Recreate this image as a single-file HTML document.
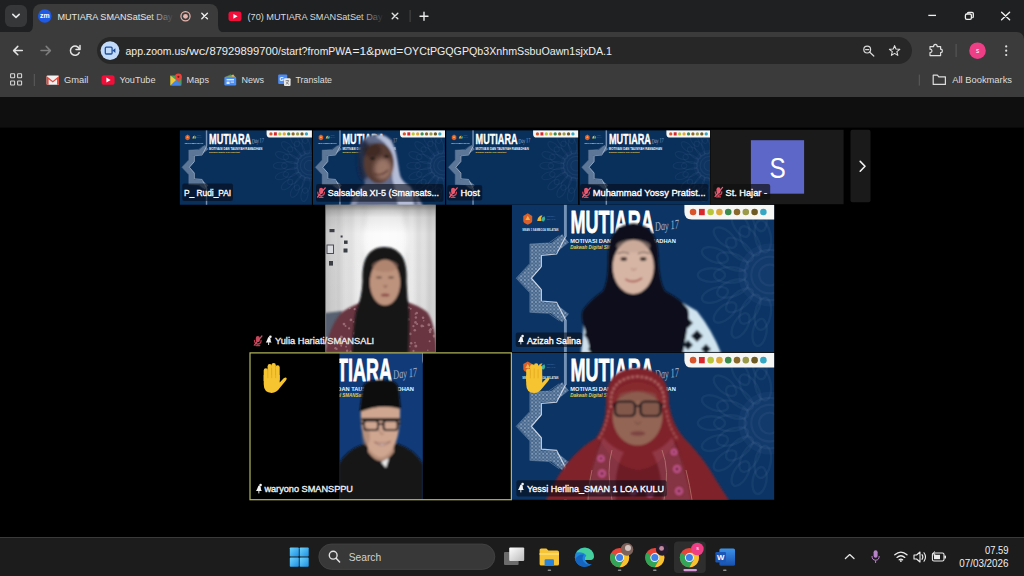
<!DOCTYPE html>
<html lang="id">
<head>
<meta charset="utf-8">
<title>MUTIARA SMANSatSet Day</title>
<style>
*{box-sizing:border-box;margin:0;padding:0}
html,body{width:1024px;height:576px;overflow:hidden;background:#000}
body{font-family:"Liberation Sans",sans-serif;color:#e3e3e3;position:relative}
.abs{position:absolute}
#tabstrip{left:0;top:0;width:1024px;height:44px;background:#1f2021}
#toolbar{left:0;top:32px;width:1024px;height:65px;background:#3b3b3b;border-top-right-radius:7px}
#tabsearch{left:5px;top:5px;width:22px;height:22px;border-radius:6px;background:#363738}
#tab1{left:33px;top:4px;width:185px;height:29px;background:#3b3b3b;border-radius:8px 8px 0 0}
#omni{left:97px;top:37px;width:815px;height:27px;border-radius:14px;background:#272727}
#content{left:0;top:97px;width:1024px;height:441px;background:#000}
#taskbar{left:0;top:537px;width:1024px;height:39px;background:#1c1c1c;border-top:1px solid #3a3a3a}
svg{position:absolute;overflow:visible}
</style>
</head>
<body>
<!-- ===== Browser chrome ===== -->
<div id="tabstrip" class="abs"></div>
<div id="toolbar" class="abs"></div>
<div id="tabsearch" class="abs"></div>
<div id="tab1" class="abs"></div>
<div id="omni" class="abs"></div>
<svg id="chrome" width="1024" height="100" viewBox="0 0 1024 100" style="left:0;top:0" font-family="Liberation Sans, sans-serif">
<defs>
<linearGradient id="fade1" x1="0" x2="1"><stop offset="0" stop-color="#3b3b3b" stop-opacity="0"/><stop offset="1" stop-color="#3b3b3b"/></linearGradient>
<linearGradient id="fade2" x1="0" x2="1"><stop offset="0" stop-color="#1f2021" stop-opacity="0"/><stop offset="1" stop-color="#1f2021"/></linearGradient>
</defs>
<!-- tab curves -->
<path d="M25 33 Q33 33 33 25 L33 33 Z" fill="#3b3b3b"/>
<path d="M226 33 Q218 33 218 25 L218 33 Z" fill="#3b3b3b"/>
<!-- tab titles -->
<text x="57.5" y="20.3" font-size="9.9" fill="#e8e8e8" textLength="115" lengthAdjust="spacingAndGlyphs">MUTIARA SMANSatSet Day</text>
<rect x="150" y="8" width="24" height="18" fill="url(#fade1)"/>
<text x="247.5" y="20.3" font-size="9.9" fill="#dadada" textLength="135" lengthAdjust="spacingAndGlyphs">(70) MUTIARA SMANSatSet Day</text>
<rect x="360" y="8" width="24" height="18" fill="url(#fade2)"/>
<!-- url -->
<text y="54.5" font-size="11.6" fill="#eeeeee"><tspan x="125.5" textLength="60.0" lengthAdjust="spacingAndGlyphs">app.zoom.us</tspan><tspan x="185.5" textLength="23.4" lengthAdjust="spacingAndGlyphs">/wc/</tspan><tspan x="209.4" textLength="68.6" lengthAdjust="spacingAndGlyphs">87929899700</tspan><tspan x="278" textLength="29.5" lengthAdjust="spacingAndGlyphs">/start?</tspan><tspan x="307.5" textLength="44.1" lengthAdjust="spacingAndGlyphs">fromPWA</tspan><tspan x="352.6" textLength="50.6" lengthAdjust="spacingAndGlyphs">=1&amp;pwd=</tspan><tspan x="403.8" textLength="208.2" lengthAdjust="spacingAndGlyphs">OYCtPGQGPQb3XnhmSsbuOawn1sjxDA.1</tspan></text>
<!-- bookmarks -->
<g font-size="9.9" fill="#dedede">
<text x="64" y="83.2" textLength="24.3" lengthAdjust="spacingAndGlyphs">Gmail</text>
<text x="119.5" y="83.2" textLength="36" lengthAdjust="spacingAndGlyphs">YouTube</text>
<text x="186.6" y="83.2" textLength="22.4" lengthAdjust="spacingAndGlyphs">Maps</text>
<text x="241.4" y="83.2" textLength="22.6" lengthAdjust="spacingAndGlyphs">News</text>
<text x="295.5" y="83.2" textLength="36.5" lengthAdjust="spacingAndGlyphs">Translate</text>
<text x="952.3" y="83.4" textLength="59.7" lengthAdjust="spacingAndGlyphs">All Bookmarks</text>
</g>
<!-- tab search chevron -->
<path d="M12.8 14.3 L16 17.3 L19.2 14.3" fill="none" stroke="#e6e6e6" stroke-width="1.6" stroke-linecap="round" stroke-linejoin="round"/>
<!-- zoom favicon -->
<circle cx="44.8" cy="16" r="6.8" fill="#1e5ae6"/>
<text x="40.1" y="18.2" font-size="7" font-weight="bold" fill="#ffffff" textLength="9.6" lengthAdjust="spacingAndGlyphs">zm</text>
<!-- recording indicator -->
<circle cx="185.5" cy="16.3" r="4.6" fill="none" stroke="#e9b5ae" stroke-width="1.2"/>
<circle cx="185.5" cy="16.3" r="2.4" fill="#e9b5ae"/>
<!-- tab close x -->
<path d="M201.8 13.2 L207.4 18.8 M207.4 13.2 L201.8 18.8" stroke="#ececec" stroke-width="1.4" stroke-linecap="round"/>
<!-- youtube favicon tab2 -->
<rect x="228.5" y="11.6" width="13" height="9.4" rx="2.6" fill="#f10f3a"/>
<path d="M233.4 13.9 L237.6 16.3 L233.4 18.7 Z" fill="#fff"/>
<path d="M392.2 13.2 L397.8 18.8 M397.8 13.2 L392.2 18.8" stroke="#e2e2e2" stroke-width="1.4" stroke-linecap="round"/>
<rect x="409.6" y="10" width="1" height="12" fill="#4a4a4a"/>
<path d="M424 12.3 V20.3 M420 16.3 H428" stroke="#ececec" stroke-width="1.4" stroke-linecap="round"/>
<!-- window controls -->
<path d="M928.3 15.4 H936" stroke="#f0f0f0" stroke-width="1.3"/>
<rect x="965.4" y="14" width="6" height="5.4" rx="1.4" fill="none" stroke="#f0f0f0" stroke-width="1.3"/>
<path d="M967.4 13.7 V13.4 Q967.4 12.3 968.6 12.3 H972 Q973.3 12.3 973.3 13.6 V16.4 Q973.3 17.6 972.2 17.6" fill="none" stroke="#f0f0f0" stroke-width="1.3"/>
<path d="M1001.6 12.2 L1009.6 19.8 M1009.6 12.2 L1001.6 19.8" stroke="#f0f0f0" stroke-width="1.4" stroke-linecap="round"/>
<!-- nav arrows -->
<path d="M22.3 50.6 H14 M17.8 46.4 L13.6 50.6 L17.8 54.8" fill="none" stroke="#e4e4e4" stroke-width="1.5" stroke-linecap="round" stroke-linejoin="round"/>
<path d="M41 50.6 H50 M46.2 46.4 L50.4 50.6 L46.2 54.8" fill="none" stroke="#7e7e7e" stroke-width="1.5" stroke-linecap="round" stroke-linejoin="round"/>
<path d="M79.4 49.2 A4.6 4.6 0 1 0 79.2 52.6" fill="none" stroke="#e4e4e4" stroke-width="1.5" stroke-linecap="round"/>
<path d="M80 45.6 V49.6 H76" fill="none" stroke="#e4e4e4" stroke-width="1.5" stroke-linecap="round" stroke-linejoin="round"/>
<!-- site chip -->
<circle cx="110" cy="50.6" r="9.4" fill="#c3dbfb"/>
<rect x="105.3" y="47.2" width="6.8" height="6.8" rx="1" fill="none" stroke="#1f4f9c" stroke-width="1.3"/>
<path d="M112.4 50.6 L115.4 48.2 V53 Z" fill="#1f4f9c"/>
<!-- omnibox right icons -->
<circle cx="867.2" cy="49.6" r="3.4" fill="none" stroke="#d9d9d9" stroke-width="1.2"/>
<path d="M869.8 52.2 L873.8 56 M865.6 49.6 H868.8" stroke="#d9d9d9" stroke-width="1.2" stroke-linecap="round"/>
<path d="M894.6 45.6 L896 49 L899.8 49.3 L896.9 51.7 L897.8 55.4 L894.6 53.4 L891.4 55.4 L892.3 51.7 L889.4 49.3 L893.2 49 Z" fill="none" stroke="#dedede" stroke-width="1.1" stroke-linejoin="round"/>
<!-- extensions puzzle -->
<path d="M930 46.6 H933.6 Q933.6 44.4 935.4 44.4 Q937.2 44.4 937.2 46.6 H940.6 V49.2 Q942.4 49.2 942.4 50.9 Q942.4 52.6 940.6 52.6 V55.6 H930 V52.6 Q932 52.4 932 50.9 Q932 49.4 930 49.2 Z" fill="none" stroke="#dedede" stroke-width="1.2" stroke-linejoin="round"/>
<rect x="955.6" y="44" width="1" height="13" fill="#5a5a5a"/>
<circle cx="977.5" cy="50.7" r="8.3" fill="#ee3e86"/>
<text x="975.9" y="52.8" font-size="6.5" fill="#fff">s</text>
<circle cx="1006.2" cy="46.4" r="1.1" fill="#e2e2e2"/><circle cx="1006.2" cy="50.7" r="1.1" fill="#e2e2e2"/><circle cx="1006.2" cy="55" r="1.1" fill="#e2e2e2"/>
<!-- bookmarks bar icons -->
<g fill="none" stroke="#d6d6d6" stroke-width="1.1"><rect x="10.6" y="73.8" width="4" height="4" rx=".6"/><rect x="17.6" y="73.8" width="4" height="4" rx=".6"/><rect x="10.6" y="81" width="4" height="4" rx=".6"/><rect x="17.6" y="81" width="4" height="4" rx=".6"/></g>
<rect x="33.8" y="74" width="1" height="12" fill="#5c5c5c"/>
<!-- gmail -->
<rect x="46.6" y="75.4" width="12.4" height="9.4" rx="1" fill="#f1f1f1"/>
<path d="M46.6 76 L52.8 81 L59 76 V84.8 H57 V79.2 L52.8 82.6 L48.6 79.2 V84.8 H46.6 Z" fill="#e34a3e"/>
<!-- youtube -->
<rect x="101.6" y="75.2" width="13" height="9.6" rx="2.6" fill="#f10f3a"/>
<path d="M106.4 77.6 L110.6 80 L106.4 82.4 Z" fill="#fff"/>
<!-- maps -->
<path d="M170.4 75.4 H180 Q181.6 75.4 181.6 77 V84 Q181.6 85.6 180 85.6 H170.4 Z" fill="#4d9b5a"/>
<path d="M170.4 85.6 L176 80 L181.6 85.6 Z" fill="#4684ee"/>
<path d="M170.4 75.4 L176 80 L170.4 85.6 Z" fill="#f3c63a"/>
<path d="M178.4 73.6 Q181.8 73.6 181.8 76.8 Q181.8 78.6 178.4 82 Q175 78.6 175 76.8 Q175 73.6 178.4 73.6 Z" fill="#e8453c"/>
<circle cx="178.4" cy="76.8" r="1.1" fill="#7a1d18"/>
<!-- news -->
<path d="M225.4 77 L233.4 74.6 L235 77 Z" fill="#e9b43a"/>
<path d="M226 76.6 L231 74.2 L232 76.6 Z" fill="#3d9c52"/>
<rect x="224.4" y="76.8" width="11.8" height="8.6" rx="1.2" fill="#4b8ff4"/>
<rect x="226.6" y="79" width="7.4" height="1.4" fill="#dfeafc"/><rect x="226.6" y="81.6" width="3" height="2.4" fill="#dfeafc"/><rect x="230.6" y="81.6" width="3.4" height="1" fill="#dfeafc"/>
<!-- translate -->
<rect x="278.2" y="74.4" width="9" height="9.6" rx="1" fill="#4c8bf5"/>
<rect x="284" y="78.2" width="6.6" height="7.8" rx="1" fill="#e8e8e8"/>
<text x="279.4" y="80.8" font-size="5.5" font-weight="bold" fill="#fff">G</text>
<path d="M285.6 80.6 H289 M287.3 80 V80.8 M285.8 84.4 Q288 83 288.6 80.8 M286.2 81.8 Q287 83.6 289 84.4" stroke="#6a6a6a" stroke-width=".7" fill="none"/>
<!-- all bookmarks -->
<rect x="918.8" y="74.6" width="1" height="11" fill="#5c5c5c"/>
<path d="M933.2 75.2 H937.4 L938.8 76.8 H945.4 V84.4 H933.2 Z" fill="none" stroke="#dcdcdc" stroke-width="1.2" stroke-linejoin="round"/>
</svg>
<!--CHROME-ICONS-->

<!-- ===== Zoom content ===== -->
<div id="content" class="abs"></div>
<!--TILES-->
<svg id="stage" width="1024" height="441" viewBox="0 97 1024 441" style="left:0;top:97px" font-family="Liberation Sans, sans-serif">
<defs>
<filter id="b05" x="-20%" y="-20%" width="140%" height="140%"><feGaussianBlur stdDeviation="0.5"/></filter>
<filter id="b1" x="-20%" y="-20%" width="140%" height="140%"><feGaussianBlur stdDeviation="1"/></filter>
<filter id="b2" x="-30%" y="-30%" width="160%" height="160%"><feGaussianBlur stdDeviation="2"/></filter>
<filter id="b4" x="-40%" y="-40%" width="180%" height="180%"><feGaussianBlur stdDeviation="4"/></filter>
<clipPath id="cT1"><rect x="179.6" y="130.2" width="132.3" height="74.7"/></clipPath>
<clipPath id="cT2"><rect x="313" y="130.2" width="132" height="74.7"/></clipPath>
<clipPath id="cT3"><rect x="446.1" y="130.2" width="132.2" height="74.7"/></clipPath>
<clipPath id="cT4"><rect x="579.4" y="130.2" width="130.6" height="74.7"/></clipPath>
<clipPath id="cYu"><rect x="325.4" y="204.8" width="110.3" height="147.4"/></clipPath>
<clipPath id="cAz"><rect x="512" y="204.7" width="262.4" height="147.5"/></clipPath>
<clipPath id="cWa"><rect x="339.5" y="353" width="83.3" height="146.6"/></clipPath>
<clipPath id="cYe"><rect x="512" y="352.8" width="262.4" height="147"/></clipPath>
<pattern id="lat" width="14" height="14" patternUnits="userSpaceOnUse"><path d="M0 0 L14 14 M14 0 L0 14 M7 0 V14 M0 7 H14" stroke="#dfe8f5" stroke-width="2.2" fill="none"/><circle cx="7" cy="7" r="3" fill="none" stroke="#dfe8f5" stroke-width="1.6"/></pattern>
<linearGradient id="curtain" x1="0" x2="1"><stop offset="0" stop-color="#c2c2c2"/><stop offset=".1" stop-color="#d8d8d8"/><stop offset=".28" stop-color="#eeeeee"/><stop offset=".55" stop-color="#f9f9f9"/><stop offset=".82" stop-color="#ececec"/><stop offset="1" stop-color="#d8d8d8"/></linearGradient>
<linearGradient id="curtainV" x1="0" y1="0" x2="0" y2="1"><stop offset="0" stop-color="#1a1410" stop-opacity=".5"/><stop offset=".045" stop-color="#000" stop-opacity=".2"/><stop offset=".09" stop-color="#000" stop-opacity=".07"/><stop offset=".2" stop-color="#000" stop-opacity="0"/><stop offset=".8" stop-color="#000" stop-opacity=".03"/><stop offset="1" stop-color="#000" stop-opacity=".14"/></linearGradient>
</defs>
<rect x="0" y="97" width="1024" height="30.6" fill="#0f0f0f"/>
<g clip-path="url(#cT1)"><g transform="translate(179.6 130.2) scale(0.13240)">
<rect x="0" y="0" width="1000" height="563" fill="#092f5b"/>
<g fill="none" stroke="#8fb0da" stroke-opacity=".075" stroke-width="9"><circle cx="982" cy="268" r="40"/><circle cx="982" cy="268" r="70"/><circle cx="982" cy="268" r="96"/><ellipse cx="956.0" cy="120.3" rx="62" ry="30" transform="rotate(-100.0 956.0 120.3)"/><ellipse cx="943.5" cy="49.4" rx="52" ry="26" transform="rotate(-100.0 943.5 49.4)"/><ellipse cx="907.0" cy="138.1" rx="62" ry="30" transform="rotate(-120.0 907.0 138.1)"/><ellipse cx="871.0" cy="75.7" rx="52" ry="26" transform="rotate(-120.0 871.0 75.7)"/><ellipse cx="867.1" cy="171.6" rx="62" ry="30" transform="rotate(-140.0 867.1 171.6)"/><ellipse cx="811.9" cy="125.3" rx="52" ry="26" transform="rotate(-140.0 811.9 125.3)"/><ellipse cx="841.0" cy="216.7" rx="62" ry="30" transform="rotate(-160.0 841.0 216.7)"/><ellipse cx="773.4" cy="192.1" rx="52" ry="26" transform="rotate(-160.0 773.4 192.1)"/><ellipse cx="832.0" cy="268.0" rx="62" ry="30" transform="rotate(-180.0 832.0 268.0)"/><ellipse cx="760.0" cy="268.0" rx="52" ry="26" transform="rotate(-180.0 760.0 268.0)"/><ellipse cx="841.0" cy="319.3" rx="62" ry="30" transform="rotate(-200.0 841.0 319.3)"/><ellipse cx="773.4" cy="343.9" rx="52" ry="26" transform="rotate(-200.0 773.4 343.9)"/><ellipse cx="867.1" cy="364.4" rx="62" ry="30" transform="rotate(-220.0 867.1 364.4)"/><ellipse cx="811.9" cy="410.7" rx="52" ry="26" transform="rotate(-220.0 811.9 410.7)"/><ellipse cx="907.0" cy="397.9" rx="62" ry="30" transform="rotate(-240.0 907.0 397.9)"/><ellipse cx="871.0" cy="460.3" rx="52" ry="26" transform="rotate(-240.0 871.0 460.3)"/><ellipse cx="956.0" cy="415.7" rx="62" ry="30" transform="rotate(-260.0 956.0 415.7)"/><ellipse cx="943.5" cy="486.6" rx="52" ry="26" transform="rotate(-260.0 943.5 486.6)"/></g><circle cx="982" cy="268" r="120" fill="#5f86bb" fill-opacity=".07"/>
<polyline points="204,128 156,166 90,170 90,233 46,280 90,327 90,390 156,394 204,432" fill="none" stroke="#b9c9e2" stroke-opacity=".13" stroke-width="42" stroke-linejoin="miter"/>
<polyline points="204,128 156,166 90,170 90,233 46,280 90,327 90,390 156,394 204,432" fill="none" stroke="url(#lat)" stroke-opacity=".55" stroke-width="40" stroke-linejoin="miter"/>
<polyline points="205,120 170,188 112,193 112,236 74,280 112,324 112,367 170,372 205,440" fill="none" stroke="#e8eef8" stroke-opacity=".8" stroke-width="4.5"/>
<polyline points="180,118 140,146 68,150 68,224 16,280 68,336 68,410 140,414 180,442" fill="none" stroke="#e8eef8" stroke-opacity=".35" stroke-width="3"/>
<rect x="198" y="0" width="11" height="122" fill="#86a1c4" fill-opacity=".85"/><rect x="198" y="438" width="11" height="125" fill="#86a1c4" fill-opacity=".85"/>
<path d="M60 33 L77 43 V62 Q77 70 60 76 Q43 70 43 62 V43 Z" fill="#d9602a"/><path d="M60 42 L69 58 H51 Z" fill="#f0b04a"/>
<path d="M96 62 Q98 42 116 40 Q108 50 112 62 Z" fill="#e9b740"/><path d="M112 62 Q110 48 124 44 Q130 54 122 64 Z" fill="#3fae9a"/>
<g font-family="Liberation Sans, sans-serif" fill="#3f6ea8" font-size="9"><text x="132" y="47" textLength="34" lengthAdjust="spacingAndGlyphs">MERDEKA</text><text x="132" y="58" textLength="34" lengthAdjust="spacingAndGlyphs">BELAJAR</text></g>
<text x="39" y="101" font-family="Liberation Sans, sans-serif" font-weight="bold" font-size="11" fill="#dbe4f3" textLength="138" lengthAdjust="spacingAndGlyphs">SMAN 1 SAMBOJA SELATAN</text>
<text x="223" y="107.5" font-family="Liberation Sans, sans-serif" font-weight="bold" font-size="117" fill="#ffffff" stroke="#ffffff" stroke-width="3" textLength="317" lengthAdjust="spacingAndGlyphs">MUTIARA</text>
<text x="546" y="100" font-family="Liberation Serif, serif" font-style="italic" font-size="50" fill="#9fb2d2" textLength="92" lengthAdjust="spacingAndGlyphs" transform="rotate(-6 546 100)">Day 17</text>
<text x="222" y="146" font-family="Liberation Sans, sans-serif" font-weight="bold" font-size="22.5" fill="#f2f5fa" textLength="402" lengthAdjust="spacingAndGlyphs">MOTIVASI DAN TAUSIYAH RAMADHAN</text>
<text x="222" y="169" font-family="Liberation Sans, sans-serif" font-weight="bold" font-style="italic" font-size="19" fill="#e9c84a" textLength="232" lengthAdjust="spacingAndGlyphs">Dakwah Digital SMANSatSet</text>
<path d="M657 0 H1000 V56 H685 Q657 56 657 28 Z" fill="#f6f6f4"/>
<circle cx="690.0" cy="28" r="12.5" fill="#d9542b"/>
<rect x="712.5" y="16" width="22" height="24" fill="#d8262c"/>
<circle cx="757.0" cy="28" r="12.5" fill="#b9c53a"/>
<circle cx="790.5" cy="28" r="12.5" fill="#e0a63a"/>
<circle cx="824.0" cy="28" r="12.5" fill="#3c8c4e"/>
<circle cx="857.5" cy="28" r="12.5" fill="#8a6a2c"/>
<circle cx="891.0" cy="28" r="12.5" fill="#9a9a4a"/>
<circle cx="924.5" cy="28" r="12.5" fill="#6e5a24"/>
<circle cx="958.0" cy="28" r="12.5" fill="#35a7c4"/>
</g></g>
<g clip-path="url(#cT2)"><g transform="translate(313 130.2) scale(0.13240)">
<rect x="0" y="0" width="1000" height="563" fill="#092f5b"/>
<g fill="none" stroke="#8fb0da" stroke-opacity=".075" stroke-width="9"><circle cx="982" cy="268" r="40"/><circle cx="982" cy="268" r="70"/><circle cx="982" cy="268" r="96"/><ellipse cx="956.0" cy="120.3" rx="62" ry="30" transform="rotate(-100.0 956.0 120.3)"/><ellipse cx="943.5" cy="49.4" rx="52" ry="26" transform="rotate(-100.0 943.5 49.4)"/><ellipse cx="907.0" cy="138.1" rx="62" ry="30" transform="rotate(-120.0 907.0 138.1)"/><ellipse cx="871.0" cy="75.7" rx="52" ry="26" transform="rotate(-120.0 871.0 75.7)"/><ellipse cx="867.1" cy="171.6" rx="62" ry="30" transform="rotate(-140.0 867.1 171.6)"/><ellipse cx="811.9" cy="125.3" rx="52" ry="26" transform="rotate(-140.0 811.9 125.3)"/><ellipse cx="841.0" cy="216.7" rx="62" ry="30" transform="rotate(-160.0 841.0 216.7)"/><ellipse cx="773.4" cy="192.1" rx="52" ry="26" transform="rotate(-160.0 773.4 192.1)"/><ellipse cx="832.0" cy="268.0" rx="62" ry="30" transform="rotate(-180.0 832.0 268.0)"/><ellipse cx="760.0" cy="268.0" rx="52" ry="26" transform="rotate(-180.0 760.0 268.0)"/><ellipse cx="841.0" cy="319.3" rx="62" ry="30" transform="rotate(-200.0 841.0 319.3)"/><ellipse cx="773.4" cy="343.9" rx="52" ry="26" transform="rotate(-200.0 773.4 343.9)"/><ellipse cx="867.1" cy="364.4" rx="62" ry="30" transform="rotate(-220.0 867.1 364.4)"/><ellipse cx="811.9" cy="410.7" rx="52" ry="26" transform="rotate(-220.0 811.9 410.7)"/><ellipse cx="907.0" cy="397.9" rx="62" ry="30" transform="rotate(-240.0 907.0 397.9)"/><ellipse cx="871.0" cy="460.3" rx="52" ry="26" transform="rotate(-240.0 871.0 460.3)"/><ellipse cx="956.0" cy="415.7" rx="62" ry="30" transform="rotate(-260.0 956.0 415.7)"/><ellipse cx="943.5" cy="486.6" rx="52" ry="26" transform="rotate(-260.0 943.5 486.6)"/></g><circle cx="982" cy="268" r="120" fill="#5f86bb" fill-opacity=".07"/>
<polyline points="204,128 156,166 90,170 90,233 46,280 90,327 90,390 156,394 204,432" fill="none" stroke="#b9c9e2" stroke-opacity=".13" stroke-width="42" stroke-linejoin="miter"/>
<polyline points="204,128 156,166 90,170 90,233 46,280 90,327 90,390 156,394 204,432" fill="none" stroke="url(#lat)" stroke-opacity=".55" stroke-width="40" stroke-linejoin="miter"/>
<polyline points="205,120 170,188 112,193 112,236 74,280 112,324 112,367 170,372 205,440" fill="none" stroke="#e8eef8" stroke-opacity=".8" stroke-width="4.5"/>
<polyline points="180,118 140,146 68,150 68,224 16,280 68,336 68,410 140,414 180,442" fill="none" stroke="#e8eef8" stroke-opacity=".35" stroke-width="3"/>
<rect x="198" y="0" width="11" height="122" fill="#86a1c4" fill-opacity=".85"/><rect x="198" y="438" width="11" height="125" fill="#86a1c4" fill-opacity=".85"/>
<path d="M60 33 L77 43 V62 Q77 70 60 76 Q43 70 43 62 V43 Z" fill="#d9602a"/><path d="M60 42 L69 58 H51 Z" fill="#f0b04a"/>
<path d="M96 62 Q98 42 116 40 Q108 50 112 62 Z" fill="#e9b740"/><path d="M112 62 Q110 48 124 44 Q130 54 122 64 Z" fill="#3fae9a"/>
<g font-family="Liberation Sans, sans-serif" fill="#3f6ea8" font-size="9"><text x="132" y="47" textLength="34" lengthAdjust="spacingAndGlyphs">MERDEKA</text><text x="132" y="58" textLength="34" lengthAdjust="spacingAndGlyphs">BELAJAR</text></g>
<text x="39" y="101" font-family="Liberation Sans, sans-serif" font-weight="bold" font-size="11" fill="#dbe4f3" textLength="138" lengthAdjust="spacingAndGlyphs">SMAN 1 SAMBOJA SELATAN</text>
<text x="223" y="107.5" font-family="Liberation Sans, sans-serif" font-weight="bold" font-size="117" fill="#ffffff" stroke="#ffffff" stroke-width="3" textLength="317" lengthAdjust="spacingAndGlyphs">MUTIARA</text>
<text x="546" y="100" font-family="Liberation Serif, serif" font-style="italic" font-size="50" fill="#9fb2d2" textLength="92" lengthAdjust="spacingAndGlyphs" transform="rotate(-6 546 100)">Day 17</text>
<text x="222" y="146" font-family="Liberation Sans, sans-serif" font-weight="bold" font-size="22.5" fill="#f2f5fa" textLength="402" lengthAdjust="spacingAndGlyphs">MOTIVASI DAN TAUSIYAH RAMADHAN</text>
<text x="222" y="169" font-family="Liberation Sans, sans-serif" font-weight="bold" font-style="italic" font-size="19" fill="#e9c84a" textLength="232" lengthAdjust="spacingAndGlyphs">Dakwah Digital SMANSatSet</text>
<path d="M657 0 H1000 V56 H685 Q657 56 657 28 Z" fill="#f6f6f4"/>
<circle cx="690.0" cy="28" r="12.5" fill="#d9542b"/>
<rect x="712.5" y="16" width="22" height="24" fill="#d8262c"/>
<circle cx="757.0" cy="28" r="12.5" fill="#b9c53a"/>
<circle cx="790.5" cy="28" r="12.5" fill="#e0a63a"/>
<circle cx="824.0" cy="28" r="12.5" fill="#3c8c4e"/>
<circle cx="857.5" cy="28" r="12.5" fill="#8a6a2c"/>
<circle cx="891.0" cy="28" r="12.5" fill="#9a9a4a"/>
<circle cx="924.5" cy="28" r="12.5" fill="#6e5a24"/>
<circle cx="958.0" cy="28" r="12.5" fill="#35a7c4"/>
</g>
<g filter="url(#b1)">
<path d="M350 206 Q354 190 364 185 L402 182 Q416 188 423 206 Z" fill="#8790ad"/>
<path d="M359.5 152 Q359.5 136 376 134.3 Q388 133.6 392.5 142 Q397.5 153 398.8 170 Q401 180 407 184 Q414 188 418 206 L356 206 Q360 192 365 184 Q361.5 170 359.5 152 Z" fill="#5f6a8a"/>
<path d="M380 134.6 Q391 137 395 150 Q398.5 166 400 177 Q404 184 411 187 L414 206 L398 206 Q396 190 392.5 180 Q392 162 389 151 Q386 141 376 137 Z" fill="#b4bdd8"/>
<ellipse cx="364" cy="160" rx="6.5" ry="20" fill="#1d2540" opacity=".85" filter="url(#b1)"/>
<ellipse cx="378.8" cy="163" rx="15" ry="20.3" fill="#553a32"/>
<ellipse cx="383" cy="169" rx="9" ry="11" fill="#b08878" opacity=".75" filter="url(#b2)"/>
<ellipse cx="372" cy="150" rx="9" ry="7" fill="#32241f" opacity=".6" filter="url(#b1)"/>
<ellipse cx="372.6" cy="158.6" rx="2.6" ry="1.5" fill="#1d1513"/><ellipse cx="386.5" cy="156.6" rx="2.6" ry="1.5" fill="#2a1c19"/>
<path d="M374 173.5 Q381 177 388 170" stroke="#5c342e" stroke-width="1.3" fill="none"/>
</g>
</g>
<g clip-path="url(#cT3)"><g transform="translate(446.1 130.2) scale(0.13240)">
<rect x="0" y="0" width="1000" height="563" fill="#092f5b"/>
<g fill="none" stroke="#8fb0da" stroke-opacity=".075" stroke-width="9"><circle cx="982" cy="268" r="40"/><circle cx="982" cy="268" r="70"/><circle cx="982" cy="268" r="96"/><ellipse cx="956.0" cy="120.3" rx="62" ry="30" transform="rotate(-100.0 956.0 120.3)"/><ellipse cx="943.5" cy="49.4" rx="52" ry="26" transform="rotate(-100.0 943.5 49.4)"/><ellipse cx="907.0" cy="138.1" rx="62" ry="30" transform="rotate(-120.0 907.0 138.1)"/><ellipse cx="871.0" cy="75.7" rx="52" ry="26" transform="rotate(-120.0 871.0 75.7)"/><ellipse cx="867.1" cy="171.6" rx="62" ry="30" transform="rotate(-140.0 867.1 171.6)"/><ellipse cx="811.9" cy="125.3" rx="52" ry="26" transform="rotate(-140.0 811.9 125.3)"/><ellipse cx="841.0" cy="216.7" rx="62" ry="30" transform="rotate(-160.0 841.0 216.7)"/><ellipse cx="773.4" cy="192.1" rx="52" ry="26" transform="rotate(-160.0 773.4 192.1)"/><ellipse cx="832.0" cy="268.0" rx="62" ry="30" transform="rotate(-180.0 832.0 268.0)"/><ellipse cx="760.0" cy="268.0" rx="52" ry="26" transform="rotate(-180.0 760.0 268.0)"/><ellipse cx="841.0" cy="319.3" rx="62" ry="30" transform="rotate(-200.0 841.0 319.3)"/><ellipse cx="773.4" cy="343.9" rx="52" ry="26" transform="rotate(-200.0 773.4 343.9)"/><ellipse cx="867.1" cy="364.4" rx="62" ry="30" transform="rotate(-220.0 867.1 364.4)"/><ellipse cx="811.9" cy="410.7" rx="52" ry="26" transform="rotate(-220.0 811.9 410.7)"/><ellipse cx="907.0" cy="397.9" rx="62" ry="30" transform="rotate(-240.0 907.0 397.9)"/><ellipse cx="871.0" cy="460.3" rx="52" ry="26" transform="rotate(-240.0 871.0 460.3)"/><ellipse cx="956.0" cy="415.7" rx="62" ry="30" transform="rotate(-260.0 956.0 415.7)"/><ellipse cx="943.5" cy="486.6" rx="52" ry="26" transform="rotate(-260.0 943.5 486.6)"/></g><circle cx="982" cy="268" r="120" fill="#5f86bb" fill-opacity=".07"/>
<polyline points="204,128 156,166 90,170 90,233 46,280 90,327 90,390 156,394 204,432" fill="none" stroke="#b9c9e2" stroke-opacity=".13" stroke-width="42" stroke-linejoin="miter"/>
<polyline points="204,128 156,166 90,170 90,233 46,280 90,327 90,390 156,394 204,432" fill="none" stroke="url(#lat)" stroke-opacity=".55" stroke-width="40" stroke-linejoin="miter"/>
<polyline points="205,120 170,188 112,193 112,236 74,280 112,324 112,367 170,372 205,440" fill="none" stroke="#e8eef8" stroke-opacity=".8" stroke-width="4.5"/>
<polyline points="180,118 140,146 68,150 68,224 16,280 68,336 68,410 140,414 180,442" fill="none" stroke="#e8eef8" stroke-opacity=".35" stroke-width="3"/>
<rect x="198" y="0" width="11" height="122" fill="#86a1c4" fill-opacity=".85"/><rect x="198" y="438" width="11" height="125" fill="#86a1c4" fill-opacity=".85"/>
<path d="M60 33 L77 43 V62 Q77 70 60 76 Q43 70 43 62 V43 Z" fill="#d9602a"/><path d="M60 42 L69 58 H51 Z" fill="#f0b04a"/>
<path d="M96 62 Q98 42 116 40 Q108 50 112 62 Z" fill="#e9b740"/><path d="M112 62 Q110 48 124 44 Q130 54 122 64 Z" fill="#3fae9a"/>
<g font-family="Liberation Sans, sans-serif" fill="#3f6ea8" font-size="9"><text x="132" y="47" textLength="34" lengthAdjust="spacingAndGlyphs">MERDEKA</text><text x="132" y="58" textLength="34" lengthAdjust="spacingAndGlyphs">BELAJAR</text></g>
<text x="39" y="101" font-family="Liberation Sans, sans-serif" font-weight="bold" font-size="11" fill="#dbe4f3" textLength="138" lengthAdjust="spacingAndGlyphs">SMAN 1 SAMBOJA SELATAN</text>
<text x="223" y="107.5" font-family="Liberation Sans, sans-serif" font-weight="bold" font-size="117" fill="#ffffff" stroke="#ffffff" stroke-width="3" textLength="317" lengthAdjust="spacingAndGlyphs">MUTIARA</text>
<text x="546" y="100" font-family="Liberation Serif, serif" font-style="italic" font-size="50" fill="#9fb2d2" textLength="92" lengthAdjust="spacingAndGlyphs" transform="rotate(-6 546 100)">Day 17</text>
<text x="222" y="146" font-family="Liberation Sans, sans-serif" font-weight="bold" font-size="22.5" fill="#f2f5fa" textLength="402" lengthAdjust="spacingAndGlyphs">MOTIVASI DAN TAUSIYAH RAMADHAN</text>
<text x="222" y="169" font-family="Liberation Sans, sans-serif" font-weight="bold" font-style="italic" font-size="19" fill="#e9c84a" textLength="232" lengthAdjust="spacingAndGlyphs">Dakwah Digital SMANSatSet</text>
<path d="M657 0 H1000 V56 H685 Q657 56 657 28 Z" fill="#f6f6f4"/>
<circle cx="690.0" cy="28" r="12.5" fill="#d9542b"/>
<rect x="712.5" y="16" width="22" height="24" fill="#d8262c"/>
<circle cx="757.0" cy="28" r="12.5" fill="#b9c53a"/>
<circle cx="790.5" cy="28" r="12.5" fill="#e0a63a"/>
<circle cx="824.0" cy="28" r="12.5" fill="#3c8c4e"/>
<circle cx="857.5" cy="28" r="12.5" fill="#8a6a2c"/>
<circle cx="891.0" cy="28" r="12.5" fill="#9a9a4a"/>
<circle cx="924.5" cy="28" r="12.5" fill="#6e5a24"/>
<circle cx="958.0" cy="28" r="12.5" fill="#35a7c4"/>
</g></g>
<g clip-path="url(#cT4)"><g transform="translate(579.4 130.2) scale(0.13240)">
<rect x="0" y="0" width="1000" height="563" fill="#092f5b"/>
<g fill="none" stroke="#8fb0da" stroke-opacity=".075" stroke-width="9"><circle cx="982" cy="268" r="40"/><circle cx="982" cy="268" r="70"/><circle cx="982" cy="268" r="96"/><ellipse cx="956.0" cy="120.3" rx="62" ry="30" transform="rotate(-100.0 956.0 120.3)"/><ellipse cx="943.5" cy="49.4" rx="52" ry="26" transform="rotate(-100.0 943.5 49.4)"/><ellipse cx="907.0" cy="138.1" rx="62" ry="30" transform="rotate(-120.0 907.0 138.1)"/><ellipse cx="871.0" cy="75.7" rx="52" ry="26" transform="rotate(-120.0 871.0 75.7)"/><ellipse cx="867.1" cy="171.6" rx="62" ry="30" transform="rotate(-140.0 867.1 171.6)"/><ellipse cx="811.9" cy="125.3" rx="52" ry="26" transform="rotate(-140.0 811.9 125.3)"/><ellipse cx="841.0" cy="216.7" rx="62" ry="30" transform="rotate(-160.0 841.0 216.7)"/><ellipse cx="773.4" cy="192.1" rx="52" ry="26" transform="rotate(-160.0 773.4 192.1)"/><ellipse cx="832.0" cy="268.0" rx="62" ry="30" transform="rotate(-180.0 832.0 268.0)"/><ellipse cx="760.0" cy="268.0" rx="52" ry="26" transform="rotate(-180.0 760.0 268.0)"/><ellipse cx="841.0" cy="319.3" rx="62" ry="30" transform="rotate(-200.0 841.0 319.3)"/><ellipse cx="773.4" cy="343.9" rx="52" ry="26" transform="rotate(-200.0 773.4 343.9)"/><ellipse cx="867.1" cy="364.4" rx="62" ry="30" transform="rotate(-220.0 867.1 364.4)"/><ellipse cx="811.9" cy="410.7" rx="52" ry="26" transform="rotate(-220.0 811.9 410.7)"/><ellipse cx="907.0" cy="397.9" rx="62" ry="30" transform="rotate(-240.0 907.0 397.9)"/><ellipse cx="871.0" cy="460.3" rx="52" ry="26" transform="rotate(-240.0 871.0 460.3)"/><ellipse cx="956.0" cy="415.7" rx="62" ry="30" transform="rotate(-260.0 956.0 415.7)"/><ellipse cx="943.5" cy="486.6" rx="52" ry="26" transform="rotate(-260.0 943.5 486.6)"/></g><circle cx="982" cy="268" r="120" fill="#5f86bb" fill-opacity=".07"/>
<polyline points="204,128 156,166 90,170 90,233 46,280 90,327 90,390 156,394 204,432" fill="none" stroke="#b9c9e2" stroke-opacity=".13" stroke-width="42" stroke-linejoin="miter"/>
<polyline points="204,128 156,166 90,170 90,233 46,280 90,327 90,390 156,394 204,432" fill="none" stroke="url(#lat)" stroke-opacity=".55" stroke-width="40" stroke-linejoin="miter"/>
<polyline points="205,120 170,188 112,193 112,236 74,280 112,324 112,367 170,372 205,440" fill="none" stroke="#e8eef8" stroke-opacity=".8" stroke-width="4.5"/>
<polyline points="180,118 140,146 68,150 68,224 16,280 68,336 68,410 140,414 180,442" fill="none" stroke="#e8eef8" stroke-opacity=".35" stroke-width="3"/>
<rect x="198" y="0" width="11" height="122" fill="#86a1c4" fill-opacity=".85"/><rect x="198" y="438" width="11" height="125" fill="#86a1c4" fill-opacity=".85"/>
<path d="M60 33 L77 43 V62 Q77 70 60 76 Q43 70 43 62 V43 Z" fill="#d9602a"/><path d="M60 42 L69 58 H51 Z" fill="#f0b04a"/>
<path d="M96 62 Q98 42 116 40 Q108 50 112 62 Z" fill="#e9b740"/><path d="M112 62 Q110 48 124 44 Q130 54 122 64 Z" fill="#3fae9a"/>
<g font-family="Liberation Sans, sans-serif" fill="#3f6ea8" font-size="9"><text x="132" y="47" textLength="34" lengthAdjust="spacingAndGlyphs">MERDEKA</text><text x="132" y="58" textLength="34" lengthAdjust="spacingAndGlyphs">BELAJAR</text></g>
<text x="39" y="101" font-family="Liberation Sans, sans-serif" font-weight="bold" font-size="11" fill="#dbe4f3" textLength="138" lengthAdjust="spacingAndGlyphs">SMAN 1 SAMBOJA SELATAN</text>
<text x="223" y="107.5" font-family="Liberation Sans, sans-serif" font-weight="bold" font-size="117" fill="#ffffff" stroke="#ffffff" stroke-width="3" textLength="317" lengthAdjust="spacingAndGlyphs">MUTIARA</text>
<text x="546" y="100" font-family="Liberation Serif, serif" font-style="italic" font-size="50" fill="#9fb2d2" textLength="92" lengthAdjust="spacingAndGlyphs" transform="rotate(-6 546 100)">Day 17</text>
<text x="222" y="146" font-family="Liberation Sans, sans-serif" font-weight="bold" font-size="22.5" fill="#f2f5fa" textLength="402" lengthAdjust="spacingAndGlyphs">MOTIVASI DAN TAUSIYAH RAMADHAN</text>
<text x="222" y="169" font-family="Liberation Sans, sans-serif" font-weight="bold" font-style="italic" font-size="19" fill="#e9c84a" textLength="232" lengthAdjust="spacingAndGlyphs">Dakwah Digital SMANSatSet</text>
<path d="M657 0 H1000 V56 H685 Q657 56 657 28 Z" fill="#f6f6f4"/>
<circle cx="690.0" cy="28" r="12.5" fill="#d9542b"/>
<rect x="712.5" y="16" width="22" height="24" fill="#d8262c"/>
<circle cx="757.0" cy="28" r="12.5" fill="#b9c53a"/>
<circle cx="790.5" cy="28" r="12.5" fill="#e0a63a"/>
<circle cx="824.0" cy="28" r="12.5" fill="#3c8c4e"/>
<circle cx="857.5" cy="28" r="12.5" fill="#8a6a2c"/>
<circle cx="891.0" cy="28" r="12.5" fill="#9a9a4a"/>
<circle cx="924.5" cy="28" r="12.5" fill="#6e5a24"/>
<circle cx="958.0" cy="28" r="12.5" fill="#35a7c4"/>
</g></g>
<rect x="710.4" y="129.8" width="133.2" height="74.4" fill="#1a1a1a"/>
<rect x="750.9" y="140.2" width="53.2" height="53.5" fill="#5c67c8"/>
<text x="769.6" y="177.9" font-size="30" fill="#ffffff" textLength="16.2" lengthAdjust="spacingAndGlyphs">S</text>
<rect x="850.5" y="129.8" width="20" height="72.4" rx="2" fill="#1a1a1a"/>
<path d="M860.2 161.4 L865 166.3 L860.2 171.2" fill="none" stroke="#f2f2f2" stroke-width="1.6" stroke-linecap="round" stroke-linejoin="round"/>
<g clip-path="url(#cYu)">
<rect x="325" y="204" width="111" height="149" fill="url(#curtain)"/>
<g filter="url(#b2)" opacity=".55">
<rect x="336" y="204" width="5" height="120" fill="#c4c4c4"/><rect x="349" y="204" width="4" height="110" fill="#d2d2d2"/>
<rect x="362" y="204" width="3" height="60" fill="#dcdcdc"/><rect x="404" y="204" width="4" height="100" fill="#dadada"/>
<rect x="416" y="204" width="5" height="110" fill="#cdcdcd"/><rect x="427" y="204" width="5" height="120" fill="#c2c2c2"/>
<ellipse cx="385" cy="240" rx="22" ry="36" fill="#ffffff"/>
</g>
<rect x="325" y="204" width="111" height="149" fill="url(#curtainV)"/>
<g filter="url(#b05)" fill="#3a3d44">
<rect x="329.5" y="229" width="5" height="3.2"/><rect x="344" y="240.5" width="3.6" height="3.4"/><rect x="340.6" y="235.5" width="2" height="2"/>
<rect x="327" y="245" width="6.5" height="8.5" fill="#d9dbe0" stroke="#4a4d55" stroke-width="1"/>
<rect x="343.5" y="248.5" width="4" height="4"/><rect x="329" y="261" width="4" height="4.6"/>
</g>
<path d="M325 313 L342 311 L344 340 L325 345 Z" fill="#566070" filter="url(#b1)"/>
<g filter="url(#b1)">
<path d="M325 353 Q329 326 342 312 Q354 304 366 301 L404 301 Q418 305 427 312 Q435 322 437 353 Z" fill="#68343f"/>
</g>
<g filter="url(#b05)" fill="#b98d97" opacity=".6">
<circle cx="340.7" cy="339.7" r="1.1"/><circle cx="429.6" cy="341.2" r="1.0"/><circle cx="415.5" cy="313.9" r="0.9"/><circle cx="354.7" cy="309.1" r="1.2"/><circle cx="415.8" cy="345.9" r="1.5"/><circle cx="410.3" cy="333.9" r="1.3"/><circle cx="354.8" cy="344.0" r="1.5"/><circle cx="408.2" cy="319.4" r="1.3"/><circle cx="430.9" cy="329.4" r="1.1"/><circle cx="415.0" cy="342.7" r="0.9"/><circle cx="335.5" cy="348.2" r="1.2"/><circle cx="415.5" cy="322.4" r="1.3"/><circle cx="410.7" cy="308.8" r="1.0"/><circle cx="336.7" cy="349.1" r="1.0"/><circle cx="427.8" cy="350.2" r="0.8"/><circle cx="416.7" cy="313.0" r="1.3"/><circle cx="415.9" cy="317.5" r="1.2"/><circle cx="344.0" cy="324.1" r="1.4"/><circle cx="423.4" cy="326.2" r="0.9"/><circle cx="347.1" cy="350.7" r="1.2"/><circle cx="423.7" cy="320.8" r="0.8"/><circle cx="428.9" cy="324.8" r="1.5"/><circle cx="413.4" cy="326.2" r="1.1"/><circle cx="430.4" cy="328.9" r="0.8"/><circle cx="414.8" cy="330.2" r="1.3"/><circle cx="353.6" cy="321.8" r="0.9"/><circle cx="434.0" cy="336.0" r="1.4"/><circle cx="354.5" cy="333.2" r="1.5"/><circle cx="341.4" cy="336.9" r="1.4"/><circle cx="430.0" cy="330.3" r="1.3"/><circle cx="417.1" cy="324.0" r="1.1"/><circle cx="434.0" cy="336.7" r="0.8"/><circle cx="350.9" cy="319.9" r="1.4"/><circle cx="349.1" cy="328.4" r="1.1"/><circle cx="411.1" cy="343.3" r="1.3"/><circle cx="346.1" cy="346.7" r="0.9"/><circle cx="430.1" cy="331.9" r="1.3"/><circle cx="408.7" cy="307.6" r="1.2"/><circle cx="423.1" cy="317.8" r="1.3"/><circle cx="342.0" cy="341.8" r="1.2"/><circle cx="413.5" cy="350.9" r="1.1"/><circle cx="421.8" cy="326.0" r="1.4"/><circle cx="409.8" cy="346.5" r="0.9"/><circle cx="433.1" cy="328.0" r="0.9"/><circle cx="341.2" cy="345.8" r="1.0"/><circle cx="349.6" cy="308.2" r="1.0"/><circle cx="344.7" cy="339.5" r="1.1"/><circle cx="345.5" cy="326.1" r="1.0"/><circle cx="350.9" cy="351.4" r="1.2"/>
</g>
<g filter="url(#b1)">
<path d="M362.5 281 Q361 247.5 384.5 247 Q408 247.5 406.5 281 Q407 297 409 312 Q409 332 408.5 353 L352 353 Q353 330 356 312 Q362 297 362.5 281 Z" fill="#121318"/>
<ellipse cx="385" cy="282.5" rx="15.2" ry="23" fill="#bd937d"/>
<ellipse cx="385" cy="266" rx="13" ry="6" fill="#a67c67" opacity=".6"/>
<path d="M376.5 277.5 H381.5 M388.5 277.5 H393.5" stroke="#4b342c" stroke-width="1.3"/>
<path d="M384 285 Q385 290 386.8 285" stroke="#8c5f50" stroke-width="1.2" fill="none"/>
<ellipse cx="385.2" cy="295" rx="4.4" ry="1.5" fill="#8e4e4a"/>
</g>
</g>
<g clip-path="url(#cAz)"><g transform="translate(512 204.7) scale(0.26240)">
<rect x="0" y="0" width="1000" height="563" fill="#0c3565"/>
<g fill="none" stroke="#8fb0da" stroke-opacity=".075" stroke-width="9"><circle cx="982" cy="268" r="40"/><circle cx="982" cy="268" r="70"/><circle cx="982" cy="268" r="96"/><ellipse cx="956.0" cy="120.3" rx="62" ry="30" transform="rotate(-100.0 956.0 120.3)"/><ellipse cx="943.5" cy="49.4" rx="52" ry="26" transform="rotate(-100.0 943.5 49.4)"/><ellipse cx="907.0" cy="138.1" rx="62" ry="30" transform="rotate(-120.0 907.0 138.1)"/><ellipse cx="871.0" cy="75.7" rx="52" ry="26" transform="rotate(-120.0 871.0 75.7)"/><ellipse cx="867.1" cy="171.6" rx="62" ry="30" transform="rotate(-140.0 867.1 171.6)"/><ellipse cx="811.9" cy="125.3" rx="52" ry="26" transform="rotate(-140.0 811.9 125.3)"/><ellipse cx="841.0" cy="216.7" rx="62" ry="30" transform="rotate(-160.0 841.0 216.7)"/><ellipse cx="773.4" cy="192.1" rx="52" ry="26" transform="rotate(-160.0 773.4 192.1)"/><ellipse cx="832.0" cy="268.0" rx="62" ry="30" transform="rotate(-180.0 832.0 268.0)"/><ellipse cx="760.0" cy="268.0" rx="52" ry="26" transform="rotate(-180.0 760.0 268.0)"/><ellipse cx="841.0" cy="319.3" rx="62" ry="30" transform="rotate(-200.0 841.0 319.3)"/><ellipse cx="773.4" cy="343.9" rx="52" ry="26" transform="rotate(-200.0 773.4 343.9)"/><ellipse cx="867.1" cy="364.4" rx="62" ry="30" transform="rotate(-220.0 867.1 364.4)"/><ellipse cx="811.9" cy="410.7" rx="52" ry="26" transform="rotate(-220.0 811.9 410.7)"/><ellipse cx="907.0" cy="397.9" rx="62" ry="30" transform="rotate(-240.0 907.0 397.9)"/><ellipse cx="871.0" cy="460.3" rx="52" ry="26" transform="rotate(-240.0 871.0 460.3)"/><ellipse cx="956.0" cy="415.7" rx="62" ry="30" transform="rotate(-260.0 956.0 415.7)"/><ellipse cx="943.5" cy="486.6" rx="52" ry="26" transform="rotate(-260.0 943.5 486.6)"/></g><circle cx="982" cy="268" r="120" fill="#5f86bb" fill-opacity=".07"/>
<polyline points="204,128 156,166 90,170 90,233 46,280 90,327 90,390 156,394 204,432" fill="none" stroke="#b9c9e2" stroke-opacity=".13" stroke-width="42" stroke-linejoin="miter"/>
<polyline points="204,128 156,166 90,170 90,233 46,280 90,327 90,390 156,394 204,432" fill="none" stroke="url(#lat)" stroke-opacity=".55" stroke-width="40" stroke-linejoin="miter"/>
<polyline points="205,120 170,188 112,193 112,236 74,280 112,324 112,367 170,372 205,440" fill="none" stroke="#e8eef8" stroke-opacity=".8" stroke-width="4.5"/>
<polyline points="180,118 140,146 68,150 68,224 16,280 68,336 68,410 140,414 180,442" fill="none" stroke="#e8eef8" stroke-opacity=".35" stroke-width="3"/>
<rect x="198" y="0" width="11" height="122" fill="#86a1c4" fill-opacity=".85"/><rect x="198" y="438" width="11" height="125" fill="#86a1c4" fill-opacity=".85"/>
<path d="M60 33 L77 43 V62 Q77 70 60 76 Q43 70 43 62 V43 Z" fill="#d9602a"/><path d="M60 42 L69 58 H51 Z" fill="#f0b04a"/>
<path d="M96 62 Q98 42 116 40 Q108 50 112 62 Z" fill="#e9b740"/><path d="M112 62 Q110 48 124 44 Q130 54 122 64 Z" fill="#3fae9a"/>
<g font-family="Liberation Sans, sans-serif" fill="#3f6ea8" font-size="9"><text x="132" y="47" textLength="34" lengthAdjust="spacingAndGlyphs">MERDEKA</text><text x="132" y="58" textLength="34" lengthAdjust="spacingAndGlyphs">BELAJAR</text></g>
<text x="39" y="101" font-family="Liberation Sans, sans-serif" font-weight="bold" font-size="11" fill="#dbe4f3" textLength="138" lengthAdjust="spacingAndGlyphs">SMAN 1 SAMBOJA SELATAN</text>
<text x="223" y="107.5" font-family="Liberation Sans, sans-serif" font-weight="bold" font-size="117" fill="#ffffff" stroke="#ffffff" stroke-width="3" textLength="317" lengthAdjust="spacingAndGlyphs">MUTIARA</text>
<text x="546" y="100" font-family="Liberation Serif, serif" font-style="italic" font-size="50" fill="#9fb2d2" textLength="92" lengthAdjust="spacingAndGlyphs" transform="rotate(-6 546 100)">Day 17</text>
<text x="222" y="146" font-family="Liberation Sans, sans-serif" font-weight="bold" font-size="22.5" fill="#f2f5fa" textLength="402" lengthAdjust="spacingAndGlyphs">MOTIVASI DAN TAUSIYAH RAMADHAN</text>
<text x="222" y="169" font-family="Liberation Sans, sans-serif" font-weight="bold" font-style="italic" font-size="19" fill="#e9c84a" textLength="232" lengthAdjust="spacingAndGlyphs">Dakwah Digital SMANSatSet</text>
<path d="M657 0 H1000 V56 H685 Q657 56 657 28 Z" fill="#f6f6f4"/>
<circle cx="690.0" cy="28" r="12.5" fill="#d9542b"/>
<rect x="712.5" y="16" width="22" height="24" fill="#d8262c"/>
<circle cx="757.0" cy="28" r="12.5" fill="#b9c53a"/>
<circle cx="790.5" cy="28" r="12.5" fill="#e0a63a"/>
<circle cx="824.0" cy="28" r="12.5" fill="#3c8c4e"/>
<circle cx="857.5" cy="28" r="12.5" fill="#8a6a2c"/>
<circle cx="891.0" cy="28" r="12.5" fill="#9a9a4a"/>
<circle cx="924.5" cy="28" r="12.5" fill="#6e5a24"/>
<circle cx="958.0" cy="28" r="12.5" fill="#35a7c4"/>
</g>
<g filter="url(#b1)">
<path d="M584 322 L598 318 L600 353 L581 353 Z" fill="#cfe0ec"/>
<path d="M683 303 L697 311 Q712 330 721 353 L680 353 Z" fill="#cfe3ef"/>
<g fill="#0d1420"><path d="M688 318 l5 5 l-5 5 l-5 -5 Z"/><path d="M697 330 l6 6 l-6 6 l-6 -6 Z"/><path d="M688 340 l5 5 l-5 5 l-5 -5 Z"/><path d="M706 344 l5 5 l-5 5 l-5 -5 Z"/><path d="M588 330 l4 5 l-4 5 l-4 -5 Z"/><path d="M592 344 l4 5 l-4 5 l-4 -5 Z"/></g>
<path d="M608 262 Q607 224 633.5 223.5 Q659 224 658.5 262 Q659.5 282 665 291 Q682 300 688 309 Q690 316 687 330 L683 353 L591 353 L585 330 Q580 316 583 310 Q590 300 603 291 Q608 282 608 262 Z" fill="#0b101a"/>
<ellipse cx="633.3" cy="267" rx="20.6" ry="27" fill="#d6b5a4"/>
<ellipse cx="633.3" cy="246" rx="17" ry="6.5" fill="#c3a192" opacity=".55"/>
<ellipse cx="623.8" cy="259" rx="3.3" ry="1.9" fill="#3a2a28"/><ellipse cx="643.2" cy="259" rx="3.3" ry="1.9" fill="#3a2a28"/>
<path d="M617.5 253.5 Q624 251 629 253.8 M638 253.8 Q643 251 649.5 253.5" stroke="#5a4640" stroke-width="1.1" fill="none"/>
<path d="M631.5 268 Q633.5 272.5 636 268" stroke="#b48b7c" stroke-width="1.2" fill="none"/>
<path d="M626 279.5 Q633.5 284 641.5 278.5" stroke="#b0655f" stroke-width="2" fill="none" stroke-linecap="round"/>
</g>
</g>
<rect x="250.2" y="352.8" width="261" height="146.8" fill="#000"/>
<g clip-path="url(#cWa)"><g transform="translate(250.9 352.8) scale(0.26120)">
<rect x="0" y="0" width="1000" height="563" fill="#113b78"/>
<g fill="none" stroke="#8fb0da" stroke-opacity=".075" stroke-width="9"><circle cx="982" cy="268" r="40"/><circle cx="982" cy="268" r="70"/><circle cx="982" cy="268" r="96"/><ellipse cx="956.0" cy="120.3" rx="62" ry="30" transform="rotate(-100.0 956.0 120.3)"/><ellipse cx="943.5" cy="49.4" rx="52" ry="26" transform="rotate(-100.0 943.5 49.4)"/><ellipse cx="907.0" cy="138.1" rx="62" ry="30" transform="rotate(-120.0 907.0 138.1)"/><ellipse cx="871.0" cy="75.7" rx="52" ry="26" transform="rotate(-120.0 871.0 75.7)"/><ellipse cx="867.1" cy="171.6" rx="62" ry="30" transform="rotate(-140.0 867.1 171.6)"/><ellipse cx="811.9" cy="125.3" rx="52" ry="26" transform="rotate(-140.0 811.9 125.3)"/><ellipse cx="841.0" cy="216.7" rx="62" ry="30" transform="rotate(-160.0 841.0 216.7)"/><ellipse cx="773.4" cy="192.1" rx="52" ry="26" transform="rotate(-160.0 773.4 192.1)"/><ellipse cx="832.0" cy="268.0" rx="62" ry="30" transform="rotate(-180.0 832.0 268.0)"/><ellipse cx="760.0" cy="268.0" rx="52" ry="26" transform="rotate(-180.0 760.0 268.0)"/><ellipse cx="841.0" cy="319.3" rx="62" ry="30" transform="rotate(-200.0 841.0 319.3)"/><ellipse cx="773.4" cy="343.9" rx="52" ry="26" transform="rotate(-200.0 773.4 343.9)"/><ellipse cx="867.1" cy="364.4" rx="62" ry="30" transform="rotate(-220.0 867.1 364.4)"/><ellipse cx="811.9" cy="410.7" rx="52" ry="26" transform="rotate(-220.0 811.9 410.7)"/><ellipse cx="907.0" cy="397.9" rx="62" ry="30" transform="rotate(-240.0 907.0 397.9)"/><ellipse cx="871.0" cy="460.3" rx="52" ry="26" transform="rotate(-240.0 871.0 460.3)"/><ellipse cx="956.0" cy="415.7" rx="62" ry="30" transform="rotate(-260.0 956.0 415.7)"/><ellipse cx="943.5" cy="486.6" rx="52" ry="26" transform="rotate(-260.0 943.5 486.6)"/></g><circle cx="982" cy="268" r="120" fill="#5f86bb" fill-opacity=".07"/>
<polyline points="204,128 156,166 90,170 90,233 46,280 90,327 90,390 156,394 204,432" fill="none" stroke="#b9c9e2" stroke-opacity=".13" stroke-width="42" stroke-linejoin="miter"/>
<polyline points="204,128 156,166 90,170 90,233 46,280 90,327 90,390 156,394 204,432" fill="none" stroke="url(#lat)" stroke-opacity=".55" stroke-width="40" stroke-linejoin="miter"/>
<polyline points="205,120 170,188 112,193 112,236 74,280 112,324 112,367 170,372 205,440" fill="none" stroke="#e8eef8" stroke-opacity=".8" stroke-width="4.5"/>
<polyline points="180,118 140,146 68,150 68,224 16,280 68,336 68,410 140,414 180,442" fill="none" stroke="#e8eef8" stroke-opacity=".35" stroke-width="3"/>
<rect x="198" y="0" width="11" height="122" fill="#86a1c4" fill-opacity=".85"/><rect x="198" y="438" width="11" height="125" fill="#86a1c4" fill-opacity=".85"/>
<path d="M60 33 L77 43 V62 Q77 70 60 76 Q43 70 43 62 V43 Z" fill="#d9602a"/><path d="M60 42 L69 58 H51 Z" fill="#f0b04a"/>
<path d="M96 62 Q98 42 116 40 Q108 50 112 62 Z" fill="#e9b740"/><path d="M112 62 Q110 48 124 44 Q130 54 122 64 Z" fill="#3fae9a"/>
<g font-family="Liberation Sans, sans-serif" fill="#3f6ea8" font-size="9"><text x="132" y="47" textLength="34" lengthAdjust="spacingAndGlyphs">MERDEKA</text><text x="132" y="58" textLength="34" lengthAdjust="spacingAndGlyphs">BELAJAR</text></g>
<text x="39" y="101" font-family="Liberation Sans, sans-serif" font-weight="bold" font-size="11" fill="#dbe4f3" textLength="138" lengthAdjust="spacingAndGlyphs">SMAN 1 SAMBOJA SELATAN</text>
<text x="223" y="107.5" font-family="Liberation Sans, sans-serif" font-weight="bold" font-size="117" fill="#ffffff" stroke="#ffffff" stroke-width="3" textLength="317" lengthAdjust="spacingAndGlyphs">MUTIARA</text>
<text x="546" y="100" font-family="Liberation Serif, serif" font-style="italic" font-size="50" fill="#9fb2d2" textLength="92" lengthAdjust="spacingAndGlyphs" transform="rotate(-6 546 100)">Day 17</text>
<text x="222" y="146" font-family="Liberation Sans, sans-serif" font-weight="bold" font-size="22.5" fill="#f2f5fa" textLength="402" lengthAdjust="spacingAndGlyphs">MOTIVASI DAN TAUSIYAH RAMADHAN</text>
<text x="222" y="169" font-family="Liberation Sans, sans-serif" font-weight="bold" font-style="italic" font-size="19" fill="#e9c84a" textLength="232" lengthAdjust="spacingAndGlyphs">Dakwah Digital SMANSatSet</text>
<path d="M657 0 H1000 V56 H685 Q657 56 657 28 Z" fill="#f6f6f4"/>
<circle cx="690.0" cy="28" r="12.5" fill="#d9542b"/>
<rect x="712.5" y="16" width="22" height="24" fill="#d8262c"/>
<circle cx="757.0" cy="28" r="12.5" fill="#b9c53a"/>
<circle cx="790.5" cy="28" r="12.5" fill="#e0a63a"/>
<circle cx="824.0" cy="28" r="12.5" fill="#3c8c4e"/>
<circle cx="857.5" cy="28" r="12.5" fill="#8a6a2c"/>
<circle cx="891.0" cy="28" r="12.5" fill="#9a9a4a"/>
<circle cx="924.5" cy="28" r="12.5" fill="#6e5a24"/>
<circle cx="958.0" cy="28" r="12.5" fill="#35a7c4"/>
</g>
<g filter="url(#b1)">
<path d="M339 501 L339 464 Q346 450 364 444 L372 440 L389 440 L398 444 Q414 449 423 464 L423 501 Z" fill="#131313"/>
<path d="M368 436 L393 436 L394 452 Q381 470 368 452 Z" fill="#b58d78"/>
<path d="M381 462 L389 458 L386 468 Z" fill="#e8e8e8"/>
<path d="M361 404 Q359.6 430 365.6 443 Q372 456.4 381 457.6 Q390 456.4 395.4 443 Q401 430 399.8 404 Z" fill="#cfa690"/><ellipse cx="366" cy="436" rx="4" ry="10" fill="#a07a68" opacity=".5"/>
<path d="M359.6 412 L362.4 389 Q363.6 381.4 372 380.4 Q381 379.4 390 380.4 Q397.6 381.4 398.6 389 L400.8 409 Q380.5 403.5 359.6 412 Z" fill="#0a0a0b"/>
<g fill="none" stroke="#15151a" stroke-width="2"><rect x="364" y="420.6" width="14" height="9.4" rx="2.5"/><rect x="383.6" y="420.6" width="14" height="9.4" rx="2.5"/><path d="M378 424 H383.6 M361 423 L364 424 M397.6 424 L400.5 423"/></g>
<path d="M361.5 419.4 H400.2" stroke="#121216" stroke-width="3"/>
<path d="M374.5 442 Q382 449 390.5 441.5 Q382 445 374.5 442 Z" fill="#f1e6e0" stroke="#8d5a50" stroke-width=".9"/>
<path d="M379.5 430 Q381 436.5 384 433" stroke="#a47e6b" stroke-width="1.1" fill="none"/>
</g>
</g>
<rect x="250" y="352.9" width="261.4" height="146.8" fill="none" stroke="#b4b85c" stroke-width="1.2"/>
<g clip-path="url(#cYe)"><g transform="translate(512 352.8) scale(0.26240)">
<rect x="0" y="0" width="1000" height="563" fill="#0c3565"/>
<g fill="none" stroke="#8fb0da" stroke-opacity=".075" stroke-width="9"><circle cx="982" cy="268" r="40"/><circle cx="982" cy="268" r="70"/><circle cx="982" cy="268" r="96"/><ellipse cx="956.0" cy="120.3" rx="62" ry="30" transform="rotate(-100.0 956.0 120.3)"/><ellipse cx="943.5" cy="49.4" rx="52" ry="26" transform="rotate(-100.0 943.5 49.4)"/><ellipse cx="907.0" cy="138.1" rx="62" ry="30" transform="rotate(-120.0 907.0 138.1)"/><ellipse cx="871.0" cy="75.7" rx="52" ry="26" transform="rotate(-120.0 871.0 75.7)"/><ellipse cx="867.1" cy="171.6" rx="62" ry="30" transform="rotate(-140.0 867.1 171.6)"/><ellipse cx="811.9" cy="125.3" rx="52" ry="26" transform="rotate(-140.0 811.9 125.3)"/><ellipse cx="841.0" cy="216.7" rx="62" ry="30" transform="rotate(-160.0 841.0 216.7)"/><ellipse cx="773.4" cy="192.1" rx="52" ry="26" transform="rotate(-160.0 773.4 192.1)"/><ellipse cx="832.0" cy="268.0" rx="62" ry="30" transform="rotate(-180.0 832.0 268.0)"/><ellipse cx="760.0" cy="268.0" rx="52" ry="26" transform="rotate(-180.0 760.0 268.0)"/><ellipse cx="841.0" cy="319.3" rx="62" ry="30" transform="rotate(-200.0 841.0 319.3)"/><ellipse cx="773.4" cy="343.9" rx="52" ry="26" transform="rotate(-200.0 773.4 343.9)"/><ellipse cx="867.1" cy="364.4" rx="62" ry="30" transform="rotate(-220.0 867.1 364.4)"/><ellipse cx="811.9" cy="410.7" rx="52" ry="26" transform="rotate(-220.0 811.9 410.7)"/><ellipse cx="907.0" cy="397.9" rx="62" ry="30" transform="rotate(-240.0 907.0 397.9)"/><ellipse cx="871.0" cy="460.3" rx="52" ry="26" transform="rotate(-240.0 871.0 460.3)"/><ellipse cx="956.0" cy="415.7" rx="62" ry="30" transform="rotate(-260.0 956.0 415.7)"/><ellipse cx="943.5" cy="486.6" rx="52" ry="26" transform="rotate(-260.0 943.5 486.6)"/></g><circle cx="982" cy="268" r="120" fill="#5f86bb" fill-opacity=".07"/>
<polyline points="204,128 156,166 90,170 90,233 46,280 90,327 90,390 156,394 204,432" fill="none" stroke="#b9c9e2" stroke-opacity=".13" stroke-width="42" stroke-linejoin="miter"/>
<polyline points="204,128 156,166 90,170 90,233 46,280 90,327 90,390 156,394 204,432" fill="none" stroke="url(#lat)" stroke-opacity=".55" stroke-width="40" stroke-linejoin="miter"/>
<polyline points="205,120 170,188 112,193 112,236 74,280 112,324 112,367 170,372 205,440" fill="none" stroke="#e8eef8" stroke-opacity=".8" stroke-width="4.5"/>
<polyline points="180,118 140,146 68,150 68,224 16,280 68,336 68,410 140,414 180,442" fill="none" stroke="#e8eef8" stroke-opacity=".35" stroke-width="3"/>
<rect x="198" y="0" width="11" height="122" fill="#86a1c4" fill-opacity=".85"/><rect x="198" y="438" width="11" height="125" fill="#86a1c4" fill-opacity=".85"/>
<path d="M60 33 L77 43 V62 Q77 70 60 76 Q43 70 43 62 V43 Z" fill="#d9602a"/><path d="M60 42 L69 58 H51 Z" fill="#f0b04a"/>
<path d="M96 62 Q98 42 116 40 Q108 50 112 62 Z" fill="#e9b740"/><path d="M112 62 Q110 48 124 44 Q130 54 122 64 Z" fill="#3fae9a"/>
<g font-family="Liberation Sans, sans-serif" fill="#3f6ea8" font-size="9"><text x="132" y="47" textLength="34" lengthAdjust="spacingAndGlyphs">MERDEKA</text><text x="132" y="58" textLength="34" lengthAdjust="spacingAndGlyphs">BELAJAR</text></g>
<text x="39" y="101" font-family="Liberation Sans, sans-serif" font-weight="bold" font-size="11" fill="#dbe4f3" textLength="138" lengthAdjust="spacingAndGlyphs">SMAN 1 SAMBOJA SELATAN</text>
<text x="223" y="107.5" font-family="Liberation Sans, sans-serif" font-weight="bold" font-size="117" fill="#ffffff" stroke="#ffffff" stroke-width="3" textLength="317" lengthAdjust="spacingAndGlyphs">MUTIARA</text>
<text x="546" y="100" font-family="Liberation Serif, serif" font-style="italic" font-size="50" fill="#9fb2d2" textLength="92" lengthAdjust="spacingAndGlyphs" transform="rotate(-6 546 100)">Day 17</text>
<text x="222" y="146" font-family="Liberation Sans, sans-serif" font-weight="bold" font-size="22.5" fill="#f2f5fa" textLength="402" lengthAdjust="spacingAndGlyphs">MOTIVASI DAN TAUSIYAH RAMADHAN</text>
<text x="222" y="169" font-family="Liberation Sans, sans-serif" font-weight="bold" font-style="italic" font-size="19" fill="#e9c84a" textLength="232" lengthAdjust="spacingAndGlyphs">Dakwah Digital SMANSatSet</text>
<path d="M657 0 H1000 V56 H685 Q657 56 657 28 Z" fill="#f6f6f4"/>
<circle cx="690.0" cy="28" r="12.5" fill="#d9542b"/>
<rect x="712.5" y="16" width="22" height="24" fill="#d8262c"/>
<circle cx="757.0" cy="28" r="12.5" fill="#b9c53a"/>
<circle cx="790.5" cy="28" r="12.5" fill="#e0a63a"/>
<circle cx="824.0" cy="28" r="12.5" fill="#3c8c4e"/>
<circle cx="857.5" cy="28" r="12.5" fill="#8a6a2c"/>
<circle cx="891.0" cy="28" r="12.5" fill="#9a9a4a"/>
<circle cx="924.5" cy="28" r="12.5" fill="#6e5a24"/>
<circle cx="958.0" cy="28" r="12.5" fill="#35a7c4"/>
</g>
<g filter="url(#b1)">
<path d="M606 404 Q604 368.5 637.5 368 Q670 368.5 669 404 Q672 424 684 438 Q704 458 716 480 L730 502 L545 502 L556 480 Q572 452 596 438 Q606 424 606 404 Z" fill="#7f2429"/>
<path d="M600 440 Q590 470 586 502 L690 502 Q686 470 676 440 Q660 468 638 470 Q616 468 600 440 Z" fill="#6b1e26" opacity=".9"/>
<ellipse cx="637.5" cy="416.5" rx="25" ry="29" fill="#936555"/>
<path d="M612 404 Q614 384 637.5 382 Q661 384 663 404 Q650 392 637.5 392 Q625 392 612 404 Z" fill="#872a2d"/>
<ellipse cx="637.5" cy="396" rx="19" ry="5" fill="#87594c" opacity=".6"/>
<g fill="#3a2528" fill-opacity=".18" stroke="#17131a" stroke-width="2.2"><rect x="615" y="401.5" width="20" height="14.5" rx="4.5"/><rect x="640.5" y="401.5" width="20" height="14.5" rx="4.5"/></g>
<path d="M635 406 H640.5 M612.5 404.5 L615 406 M660.5 406 L664 404.5" stroke="#17131a" stroke-width="2"/>
<path d="M635 421 Q637.5 427 641 421.5" stroke="#7a5044" stroke-width="1.2" fill="none"/>
<ellipse cx="637.8" cy="433.5" rx="7.5" ry="2.2" fill="#7d4240"/>
</g>
<g filter="url(#b1)">
<path d="M603 437 Q590 466 587 502 L616 502 Q613 472 624 452 Q612 448 603 437 Z" fill="#b86880" opacity=".32"/>
<path d="M672 437 Q686 466 691 502 L662 502 Q663 472 652 452 Q664 448 672 437 Z" fill="#b86880" opacity=".32"/>
<path d="M611 408 Q608 378 637.5 376.5 Q667 378 664 408" fill="none" stroke="#c98f86" stroke-width="3" opacity=".65" stroke-dasharray="3 1.6"/>
<path d="M609 410 Q606 428 598 440 M666 410 Q669 428 678 440" fill="none" stroke="#c98f86" stroke-width="2.4" opacity=".5" stroke-dasharray="3 1.6"/>
</g>
<g filter="url(#b1)" fill="#5a1a2c" stroke="#cf5c9e" stroke-width="2.4" opacity=".8">
<circle cx="601" cy="458.5" r="2.6"/><circle cx="602" cy="473.5" r="3"/><circle cx="600" cy="490" r="3"/><circle cx="677" cy="469" r="3"/><circle cx="679" cy="491" r="3"/><circle cx="674" cy="452" r="2.4"/><circle cx="633" cy="492" r="2.4"/><circle cx="650" cy="494" r="2.4"/>
</g>
<g filter="url(#b05)" fill="none" stroke="#c99a8a" stroke-width="1" opacity=".55">
<path d="M612 450 Q606 470 612 500"/><path d="M662 450 Q670 470 664 500"/><path d="M592 470 Q588 486 588 500"/><path d="M686 470 Q690 486 692 500"/>
</g>
</g>
<g id="labels">
<rect x="182.3" y="183.6" width="50.7" height="17.3" rx="2" fill="#070b14" fill-opacity="0.58"/>
<text x="184" y="196.2" font-size="9.5" font-weight="normal" fill="#ffffff" stroke="#ffffff" stroke-width=".35" textLength="47.2" lengthAdjust="spacingAndGlyphs">P_ Rudi_PAI</text>
<rect x="316" y="184" width="127.5" height="17.7" rx="2" fill="#070b14" fill-opacity="0.58"/>
<g transform="translate(316.6 187.4)" opacity="1" fill="none" stroke="#d2475a" stroke-linecap="round"><rect x="2.5" y="0.3" width="4" height="6.4" rx="2" fill="#ea5468" stroke="none"/><path d="M1.2 4.8 Q1.2 8.2 4.5 8.2 Q7.8 8.2 7.8 4.8 M4.5 8.2 V9.9 M2.6 9.9 H6.4" stroke-width="1.3"/><path d="M8.6 0.4 L1 9.6" stroke-width="1.2" stroke="#e8607a"/></g>
<text x="327.7" y="196.2" font-size="9.5" font-weight="normal" fill="#ffffff" stroke="#ffffff" stroke-width=".35" textLength="111.3" lengthAdjust="spacingAndGlyphs">Salsabela XI-5 (Smansats...</text>
<rect x="447.3" y="185" width="34.9" height="15.4" rx="2" fill="#070b14" fill-opacity="0.58"/>
<g transform="translate(448.6 187.4)" opacity="1" fill="none" stroke="#d2475a" stroke-linecap="round"><rect x="2.5" y="0.3" width="4" height="6.4" rx="2" fill="#ea5468" stroke="none"/><path d="M1.2 4.8 Q1.2 8.2 4.5 8.2 Q7.8 8.2 7.8 4.8 M4.5 8.2 V9.9 M2.6 9.9 H6.4" stroke-width="1.3"/><path d="M8.6 0.4 L1 9.6" stroke-width="1.2" stroke="#e8607a"/></g>
<text x="460.6" y="196.2" font-size="9.5" font-weight="normal" fill="#ffffff" stroke="#ffffff" stroke-width=".35" textLength="19.2" lengthAdjust="spacingAndGlyphs">Host</text>
<rect x="580" y="184" width="128.3" height="17.0" rx="2" fill="#070b14" fill-opacity="0.58"/>
<g transform="translate(581.6 187.4)" opacity="1" fill="none" stroke="#d2475a" stroke-linecap="round"><rect x="2.5" y="0.3" width="4" height="6.4" rx="2" fill="#ea5468" stroke="none"/><path d="M1.2 4.8 Q1.2 8.2 4.5 8.2 Q7.8 8.2 7.8 4.8 M4.5 8.2 V9.9 M2.6 9.9 H6.4" stroke-width="1.3"/><path d="M8.6 0.4 L1 9.6" stroke-width="1.2" stroke="#e8607a"/></g>
<text x="592.7" y="196.2" font-size="9.5" font-weight="normal" fill="#ffffff" stroke="#ffffff" stroke-width=".35" textLength="112.9" lengthAdjust="spacingAndGlyphs">Muhammad Yossy Pratist...</text>
<rect x="713.2" y="184" width="57.0" height="15.6" rx="2" fill="#101010" fill-opacity="0.7"/>
<g transform="translate(714 187)" opacity="1" fill="none" stroke="#d2475a" stroke-linecap="round"><rect x="2.5" y="0.3" width="4" height="6.4" rx="2" fill="#ea5468" stroke="none"/><path d="M1.2 4.8 Q1.2 8.2 4.5 8.2 Q7.8 8.2 7.8 4.8 M4.5 8.2 V9.9 M2.6 9.9 H6.4" stroke-width="1.3"/><path d="M8.6 0.4 L1 9.6" stroke-width="1.2" stroke="#e8607a"/></g>
<text x="725.5" y="196.2" font-size="9.5" font-weight="normal" fill="#ffffff" stroke="#ffffff" stroke-width=".35" textLength="41.5" lengthAdjust="spacingAndGlyphs">St. Hajar -</text>
<g transform="translate(253.3 335.6)" opacity="0.85" fill="none" stroke="#d2475a" stroke-linecap="round"><rect x="2.5" y="0.3" width="4" height="6.4" rx="2" fill="#ea5468" stroke="none"/><path d="M1.2 4.8 Q1.2 8.2 4.5 8.2 Q7.8 8.2 7.8 4.8 M4.5 8.2 V9.9 M2.6 9.9 H6.4" stroke-width="1.3"/><path d="M8.6 0.4 L1 9.6" stroke-width="1.2" stroke="#e8607a"/></g>
<g transform="translate(265.6 335.2)" fill="#f4f4f4"><circle cx="4.8" cy="1.5" r="1.3"/><path d="M3.3 1.6 L4.9 3.4 L5.2 6 L6 7.3 L0.2 7.3 L1.2 5.6 L2.4 2.6 Z"/><rect x="2.6" y="7" width="0.9" height="2.8"/></g>
<text x="275" y="344" font-size="9.5" font-weight="normal" fill="#e9e9e9" stroke="#e9e9e9" stroke-width=".35" textLength="99.2" lengthAdjust="spacingAndGlyphs">Yulia Hariati/SMANSALI</text>
<rect x="515.7" y="332.5" width="66.5" height="14.4" rx="2" fill="#070b14" fill-opacity="0.58"/>
<g transform="translate(517.8 334.6)" fill="#f4f4f4"><circle cx="4.8" cy="1.5" r="1.3"/><path d="M3.3 1.6 L4.9 3.4 L5.2 6 L6 7.3 L0.2 7.3 L1.2 5.6 L2.4 2.6 Z"/><rect x="2.6" y="7" width="0.9" height="2.8"/></g>
<text x="526.9" y="343.6" font-size="9.5" font-weight="normal" fill="#ffffff" stroke="#ffffff" stroke-width=".35" textLength="54.0" lengthAdjust="spacingAndGlyphs">Azizah Salina</text>
<g transform="translate(255.8 483.6)" fill="#f4f4f4"><circle cx="4.8" cy="1.5" r="1.3"/><path d="M3.3 1.6 L4.9 3.4 L5.2 6 L6 7.3 L0.2 7.3 L1.2 5.6 L2.4 2.6 Z"/><rect x="2.6" y="7" width="0.9" height="2.8"/></g>
<text x="264.4" y="492" font-size="9.5" font-weight="normal" fill="#f0f0f0" stroke="#f0f0f0" stroke-width=".35" textLength="88.6" lengthAdjust="spacingAndGlyphs">waryono SMANSPPU</text>
<rect x="516.4" y="480.2" width="150.3" height="16.2" rx="2" fill="#070b14" fill-opacity="0.58"/>
<g transform="translate(517.8 482.6)" fill="#f4f4f4"><circle cx="4.8" cy="1.5" r="1.3"/><path d="M3.3 1.6 L4.9 3.4 L5.2 6 L6 7.3 L0.2 7.3 L1.2 5.6 L2.4 2.6 Z"/><rect x="2.6" y="7" width="0.9" height="2.8"/></g>
<text x="527" y="492.1" font-size="9.5" font-weight="normal" fill="#ffffff" stroke="#ffffff" stroke-width=".35" textLength="137.0" lengthAdjust="spacingAndGlyphs">Yessi Herlina_SMAN 1 LOA KULU</text>
<g transform="translate(263.3 363.1)" fill="#f6c431"><rect x="0.4" y="5.2" width="4.3" height="14" rx="2.1"/><rect x="4.3" y="1" width="4.3" height="16" rx="2.1"/><rect x="8.2" y="0" width="4.3" height="16" rx="2.1"/><rect x="12.1" y="2.2" width="4.3" height="16" rx="2.1"/><path d="M0.4 12 H16.4 V19.5 L20.4 15.2 Q22.6 13.6 23.3 15 Q23.8 16 22.4 17.6 L16.4 25 Q13.4 29.8 8.4 29.8 Q0.4 29.8 0.4 21 Z"/><path d="M4.5 6 V15 M8.4 5 V15 M12.3 6 V15" stroke="#e1a51c" stroke-width=".7" fill="none"/></g>
<g transform="translate(525.8 363.3)" fill="#f6c431"><rect x="0.4" y="5.2" width="4.3" height="14" rx="2.1"/><rect x="4.3" y="1" width="4.3" height="16" rx="2.1"/><rect x="8.2" y="0" width="4.3" height="16" rx="2.1"/><rect x="12.1" y="2.2" width="4.3" height="16" rx="2.1"/><path d="M0.4 12 H16.4 V19.5 L20.4 15.2 Q22.6 13.6 23.3 15 Q23.8 16 22.4 17.6 L16.4 25 Q13.4 29.8 8.4 29.8 Q0.4 29.8 0.4 21 Z"/><path d="M4.5 6 V15 M8.4 5 V15 M12.3 6 V15" stroke="#e1a51c" stroke-width=".7" fill="none"/></g>
</g>
</svg>
<!--/TILES-->

<!-- ===== Taskbar ===== -->
<div id="taskbar" class="abs"></div>
<svg id="tb" width="1024" height="39" viewBox="0 537 1024 39" style="left:0;top:537px" font-family="Liberation Sans, sans-serif">
<defs>
<linearGradient id="win" x1="0" y1="0" x2="1" y2="1"><stop offset="0" stop-color="#6fd3fa"/><stop offset="1" stop-color="#1a8fe6"/></linearGradient>
<linearGradient id="edgeg" x1="0" y1="0" x2="1" y2="1"><stop offset="0" stop-color="#37c6d0"/><stop offset=".5" stop-color="#1f8fe0"/><stop offset="1" stop-color="#1456b8"/></linearGradient>
<linearGradient id="wordg" x1="0" y1="0" x2="0" y2="1"><stop offset="0" stop-color="#3c93ea"/><stop offset="1" stop-color="#174fae"/></linearGradient>
<linearGradient id="tvg" x1="0" y1="0" x2="1" y2="1"><stop offset="0" stop-color="#ffffff"/><stop offset="1" stop-color="#b9b9b9"/></linearGradient>
</defs>
<!-- start -->
<g fill="url(#win)"><rect x="289.8" y="547.4" width="9" height="9.2" rx=".8"/><rect x="299.7" y="547.4" width="9" height="9.2" rx=".8"/><rect x="289.8" y="557.6" width="9" height="9.2" rx=".8"/><rect x="299.7" y="557.6" width="9" height="9.2" rx=".8"/></g>
<!-- search -->
<rect x="318.8" y="544" width="176" height="25.4" rx="12.7" fill="#383838" stroke="#454545" stroke-width=".8"/>
<circle cx="333.2" cy="555.2" r="3.9" fill="none" stroke="#e2e2e2" stroke-width="1.4"/><path d="M336.1 558.2 L339.6 561.9" stroke="#e2e2e2" stroke-width="1.5" stroke-linecap="round"/>
<text x="348.7" y="561" font-size="11.2" fill="#d2d2d2" textLength="32.5" lengthAdjust="spacingAndGlyphs">Search</text>
<!-- task view -->
<rect x="504" y="552" width="14.6" height="13" rx="1" fill="#6b6b6b"/><rect x="509.2" y="547.6" width="15" height="13.4" rx="1" fill="url(#tvg)"/>
<!-- explorer -->
<path d="M539.6 550 Q539.6 548.4 541.2 548.4 H546.4 L548.4 550.6 H557.4 Q559 550.6 559 552.2 V564 Q559 565.6 557.4 565.6 H541.2 Q539.6 565.6 539.6 564 Z" fill="#f7c437"/>
<rect x="539.6" y="553" width="19.4" height="2" fill="#fbd866"/>
<path d="M544.6 565.6 V560.4 Q544.6 559.2 545.8 559.2 H552.8 Q554 559.2 554 560.4 V565.6 Z" fill="#2b84dc"/>
<rect x="547.6" y="569.4" width="3.6" height="1.6" rx=".8" fill="#8e8e8e"/>
<!-- edge -->
<circle cx="584.4" cy="557.2" r="9.6" fill="#1f86d9"/>
<path d="M576 552.6 Q580 547.4 586 547.8 Q593.4 548.8 594 556.6 Q594 560 590.4 560 H585 Q584.4 557 586.4 555.4 Q583 551.4 576 552.6 Z" fill="#45cf9f"/>
<path d="M575.2 559.4 Q577.6 566.8 585.4 566.8 Q589.4 566.6 592 564 Q586 565.4 583.4 561.6 Q581.4 558 584 554.6 Q578 554 575.2 559.4 Z" fill="#1565c0"/>
<path d="M585.2 559.9 H591.4 Q594.2 559.6 594 556.6 Q594.8 561.4 591.8 564 Q587.4 564.6 585.2 559.9 Z" fill="#1c1c1c"/>
<!-- chrome x3 -->
<rect x="674" y="541.4" width="31.8" height="31.6" rx="4" fill="#2e2e2e"/>
<g id="c1"><circle cx="619.6" cy="557.6" r="9.6" fill="#e8443a"/><path d="M619.6 557.6 L611.3 552.8 A9.6 9.6 0 0 0 619.6 567.2 L623.6 560.2 Z" fill="#33a556"/><path d="M619.6 557.6 L623.8 559.9 L619.6 567.2 A9.6 9.6 0 0 0 627.9 552.8 L619.6 552.8 Z" fill="#f7c32e"/><circle cx="619.6" cy="557.6" r="4.5" fill="#f3f3f3"/><circle cx="619.6" cy="557.6" r="3.5" fill="#3f7fe8"/></g>
<g id="c2"><circle cx="654.8" cy="557.6" r="9.6" fill="#e8443a"/><path d="M654.8 557.6 L646.5 552.8 A9.6 9.6 0 0 0 654.8 567.2 L658.8 560.2 Z" fill="#33a556"/><path d="M654.8 557.6 L659 559.9 L654.8 567.2 A9.6 9.6 0 0 0 663.1 552.8 L654.8 552.8 Z" fill="#f7c32e"/><circle cx="654.8" cy="557.6" r="4.5" fill="#f3f3f3"/><circle cx="654.8" cy="557.6" r="3.5" fill="#3f7fe8"/></g>
<g id="c3"><circle cx="689.4" cy="557.6" r="9.6" fill="#e8443a"/><path d="M689.4 557.6 L681.1 552.8 A9.6 9.6 0 0 0 689.4 567.2 L693.4 560.2 Z" fill="#33a556"/><path d="M689.4 557.6 L693.6 559.9 L689.4 567.2 A9.6 9.6 0 0 0 697.7 552.8 L689.4 552.8 Z" fill="#f7c32e"/><circle cx="689.4" cy="557.6" r="4.5" fill="#f3f3f3"/><circle cx="689.4" cy="557.6" r="3.5" fill="#3f7fe8"/></g>
<circle cx="627" cy="549.4" r="6.3" fill="#7d625b"/><circle cx="628" cy="548" r="3" fill="#d2c4c0"/>
<circle cx="662.2" cy="549.4" r="6.3" fill="#241c2c"/><circle cx="661.6" cy="548.4" r="2.4" fill="#c48aa0"/>
<circle cx="697.4" cy="549" r="6.3" fill="#ee3e86"/><text x="696.2" y="550.4" font-size="5.5" fill="#fff">s</text>
<rect x="617.8" y="569.4" width="3.6" height="1.6" rx=".8" fill="#8e8e8e"/><rect x="653" y="569.4" width="3.6" height="1.6" rx=".8" fill="#8e8e8e"/>
<rect x="683.4" y="569" width="13.6" height="2.2" rx="1.1" fill="#d99ada"/>
<!-- word -->
<rect x="719.4" y="548.4" width="15.6" height="17.4" rx="1.6" fill="url(#wordg)"/>
<rect x="715.4" y="552" width="10.6" height="10.4" rx="1.2" fill="#1a57b6"/>
<text x="717" y="560.4" font-size="8" font-weight="bold" fill="#fff" textLength="7.4" lengthAdjust="spacingAndGlyphs">W</text>
<rect x="723" y="569.4" width="3.6" height="1.6" rx=".8" fill="#8e8e8e"/>
<!-- tray -->
<path d="M845.4 558.6 L849.7 554.6 L854 558.6" fill="none" stroke="#e6e6e6" stroke-width="1.3" stroke-linecap="round" stroke-linejoin="round"/>
<rect x="873.6" y="550.2" width="4" height="7.6" rx="2" fill="#b783c8"/><path d="M872 556 Q872 560.2 875.6 560.2 Q879.2 560.2 879.2 556 M875.6 560.4 V563" fill="none" stroke="#b783c8" stroke-width="1"/>
<g fill="none" stroke="#ececec" stroke-width="1.3" stroke-linecap="round"><path d="M894.8 554.8 Q900.9 549.4 907 554.8"/><path d="M897 557.4 Q900.9 554 904.8 557.4"/><path d="M899.2 559.8 Q900.9 558.4 902.6 559.8"/></g><circle cx="900.9" cy="561" r=".9" fill="#ececec"/>
<path d="M914 555 H916.6 L920 552 V562 L916.6 559 H914 Z" fill="none" stroke="#ececec" stroke-width="1.1" stroke-linejoin="round"/><g fill="none" stroke="#ececec" stroke-width="1.1" stroke-linecap="round"><path d="M922 554.6 Q923.8 557 922 559.4"/><path d="M924 552.8 Q927 557 924 561.2"/></g>
<rect x="932.4" y="553" width="11.6" height="8" rx="1.6" fill="none" stroke="#ececec" stroke-width="1.1"/><rect x="944.4" y="555.4" width="1.6" height="3.2" rx=".6" fill="#ececec"/><rect x="934" y="554.8" width="6" height="4.4" fill="#ececec"/><path d="M934.6 551.4 L933 554 H935 L934 556" stroke="#ececec" stroke-width=".9" fill="none"/>
<text x="985" y="554.2" font-size="10" fill="#f0f0f0" textLength="23.5" lengthAdjust="spacingAndGlyphs">07.59</text>
<text x="959.3" y="566.6" font-size="10" fill="#f0f0f0" textLength="49.2" lengthAdjust="spacingAndGlyphs">07/03/2026</text>
</svg>
</body>
</html>
